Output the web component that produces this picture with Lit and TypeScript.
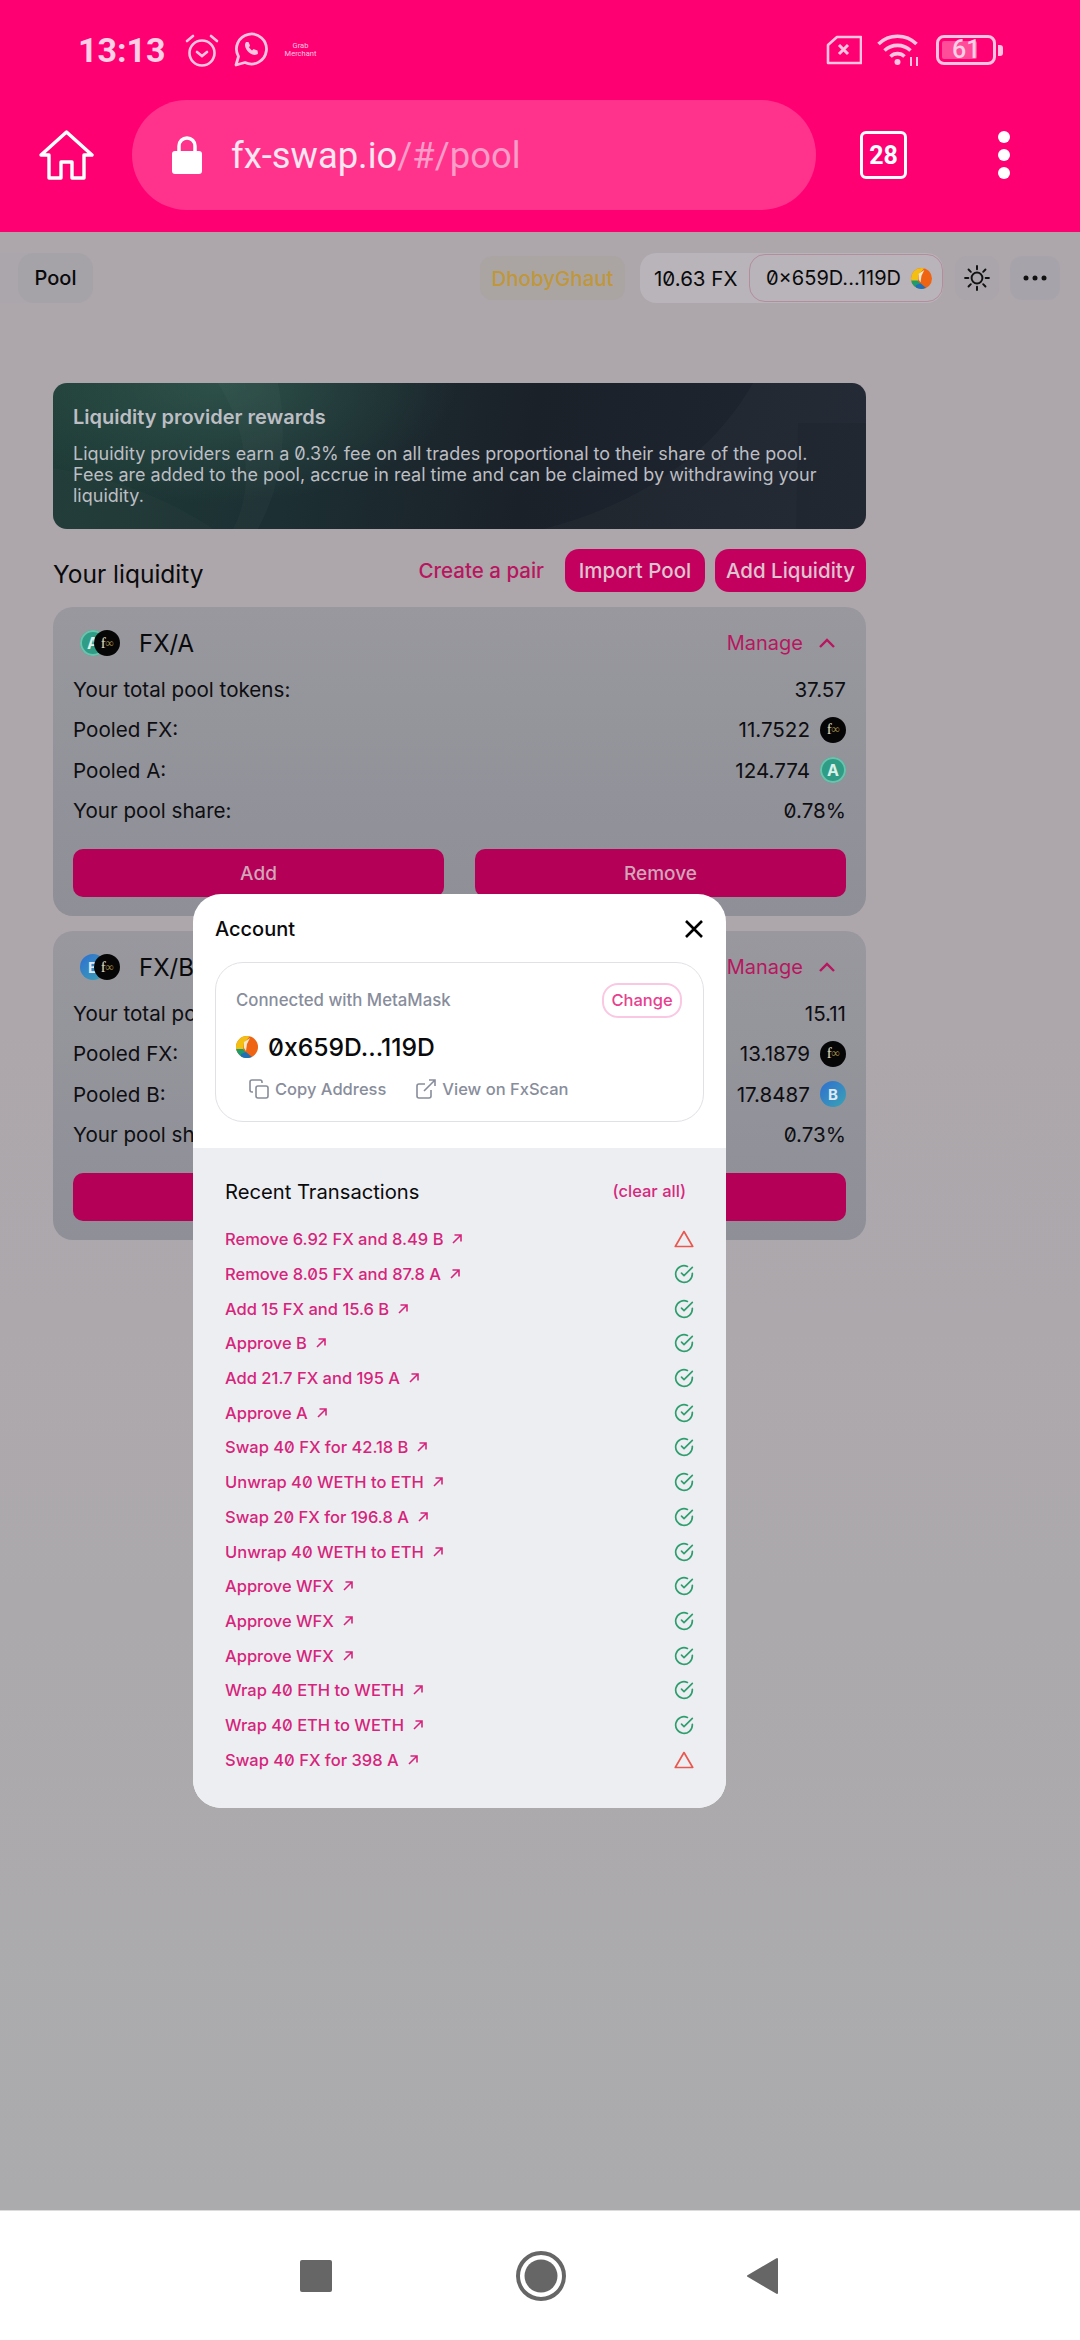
import { LitElement, html, css } from "lit";
import { customElement } from "lit/decorators.js";

const txs: [string, boolean][] = [
  ["Remove 6.92 FX and 8.49 B", false],
  ["Remove 8.05 FX and 87.8 A", true],
  ["Add 15 FX and 15.6 B", true],
  ["Approve B", true],
  ["Add 21.7 FX and 195 A", true],
  ["Approve A", true],
  ["Swap 40 FX for 42.18 B", true],
  ["Unwrap 40 WETH to ETH", true],
  ["Swap 20 FX for 196.8 A", true],
  ["Unwrap 40 WETH to ETH", true],
  ["Approve WFX", true],
  ["Approve WFX", true],
  ["Approve WFX", true],
  ["Wrap 40 ETH to WETH", true],
  ["Wrap 40 ETH to WETH", true],
  ["Swap 40 FX for 398 A", false],
];

const identicon = (size: number, id: string) => html`<svg width=${size} height=${size} viewBox="0 0 22 22" aria-hidden="true">
  <defs><clipPath id=${id}><circle cx="11" cy="11" r="11"></circle></clipPath></defs>
  <g clip-path="url(#${id})">
    <rect width="22" height="22" fill="#ee6413"></rect>
    <path d="M0 0H14L8 7 7 16 0 14Z" fill="#f2bf12"></path>
    <path d="M0 13 7 13 14 22H0Z" fill="#1f9c6c"></path>
    <path d="M5 18 10 16 17 22H5Z" fill="#1f6fb8"></path>
    <path d="M8 6 14 2 11 8 10 15 8 12Z" fill="#f4e6c8"></path>
  </g>
</svg>`;

@customElement("token-icon")
class TokenIcon extends LitElement {
  static properties = { kind: {} };
  kind = "fx";
  static styles = css`
    :host { display: block; width: 26px; height: 26px; position: relative; }
    .c { width: 100%; height: 100%; border-radius: 50%; display: flex; align-items: center; justify-content: center; box-sizing: border-box; font-family: Inter, sans-serif; }
    .fx { background: #060606; color: #e6e0cc; font: 15px "Liberation Serif", serif; letter-spacing: -0.5px; }
    .fx span { color: #a8934a; font-size: 12px; }
    .a { background: #2f9d85; color: #dcefe9; font-weight: 700; font-size: 16px; box-shadow: inset 0 0 0 2px #6cc2ad; }
    .b { background: linear-gradient(135deg, #2f6fd0, #3aa3b4); color: #dfe9f5; font-weight: 700; font-size: 15px; }
  `;
  render() {
    if (this.kind === "fx") return html`<div class="c fx">f<span>∞</span></div>`;
    return html`<div class="c ${this.kind}">${this.kind.toUpperCase()}</div>`;
  }
}

@customElement("app-root")
class AppRoot extends LitElement {
  static styles = css`
    :host { display: block; width: 1080px; height: 2340px; overflow: hidden; font-family: Inter, "Liberation Sans", sans-serif; font-feature-settings: "zero" 1; color: #0a0a0c; }
    .page { width: 1080px; height: 2340px; display: flex; flex-direction: column; }

    .chrome { height: 232px; flex: none; background: #ff0073; box-sizing: border-box; display: flex; flex-direction: column; color: #fff; }
    .status { height: 100px; flex: none; display: flex; align-items: center; padding: 0 77px 0 78px; box-sizing: border-box; font-family: Roboto, sans-serif; }
    .time { font-size: 34px; font-weight: 700; color: #ffd0e5; margin-right: 18px; }
    .status svg { display: block; flex: none; }
    .grab { font-size: 7.5px; line-height: 8px; text-align: center; margin-left: 16px; color: #ffc8e0; }
    .spacer { flex: 1; }
    .batt { width: 60px; height: 30px; border: 3px solid #ffc4df; border-radius: 8px; box-sizing: border-box; margin-left: 14px; display: flex; align-items: center; padding: 3px; position: relative; }
    .batt i { display: block; width: 35px; height: 100%; background: #ff4d9a; border-radius: 2px; }
    .batt b { position: absolute; left: 13px; top: 0; font-size: 25px; line-height: 24px; font-weight: 500; color: #ffd0e5; }
    .nub { width: 5px; height: 11px; background: #ffc4df; border-radius: 0 3px 3px 0; margin-left: 2px; }
    .addr { display: flex; align-items: center; height: 110px; padding: 0 0 0 39px; }
    .pill { margin-left: 38px; width: 684px; height: 110px; border-radius: 55px; background: #ff338c; display: flex; align-items: center; padding-left: 40px; box-sizing: border-box; font: 36.4px Roboto, sans-serif; }
    .pill .host { margin-left: 29px; color: #ffe6f1; }
    .pill .path { color: #ff9cc8; }
    .tabs { margin-left: 44px; width: 47px; height: 48px; border: 3px solid #fff; border-radius: 6px; box-sizing: border-box; display: flex; align-items: center; justify-content: center; font: 700 25px Roboto, sans-serif; }
    .dots { margin-left: 91px; display: flex; flex-direction: column; gap: 6px; }
    .dots i { width: 12px; height: 12px; border-radius: 50%; background: #fff; display: block; }

    main { flex: 1; position: relative; background: linear-gradient(180deg, #ada6ab 0%, #ada7ac 40%, #ababad 100%); overflow: hidden; }
    .topbar { display: flex; align-items: center; height: 50px; margin-top: 21px; }
    .nav-pill { background: #aaa6ab; border-radius: 0 16px 16px 0; width: 93px; height: 50px; display: flex; justify-content: flex-end; }
    .nav-pill span { width: 75px; background: #a5a3a8; border-radius: 16px; display: flex; align-items: center; justify-content: center; font-size: 20px; font-weight: 500; }
    .net { margin-left: 387px; width: 145px; height: 44px; border-radius: 12px; background: #aaa5a3; color: #c0973b; display: flex; align-items: center; justify-content: center; font-size: 20.5px; font-weight: 500; }
    .wallet { margin-left: 15px; height: 50px; width: 303px; background: #b8b4b9; border-radius: 16px; display: flex; align-items: center; font-size: 20.5px; box-sizing: border-box; padding-left: 14px; }
    .acct { margin-left: auto; width: 194px; height: 48px; border: 1.5px solid #b48d9c; border-radius: 16px; box-sizing: border-box; display: flex; align-items: center; padding-left: 16px; gap: 10px; background: #b8b4b9; font-size: 20px; }
    .sq { width: 44px; height: 44px; border-radius: 12px; display: flex; align-items: center; justify-content: center; background: #a9a5aa; flex: none; }
    .sq.sun { margin-left: 12px; }
    .sq.more { margin-left: 11px; width: 50px; background: #a6a4aa; }

    .content { margin: 80px 0 0 53px; width: 813px; display: flex; flex-direction: column; }
    .banner { height: 146px; border-radius: 14px; box-sizing: border-box; padding: 22px 20px 0; color: #bcbec3; overflow: hidden; position: relative;
      background: radial-gradient(ellipse 240px 120px at 165px 0, rgba(58,105,90,0.55), rgba(58,105,90,0) 100%), linear-gradient(100deg, #1f3c37 0%, #1c3033 28%, #1b2129 58%, #1f2632 100%); }
    .banner svg { position: absolute; inset: 0; }
    .banner h3, .banner p { position: relative; }
    .banner h3 { margin: 0 0 14px; font-size: 20px; line-height: 24px; font-weight: 600; }
    .banner p { margin: 0; font-size: 18px; line-height: 21px; }
    .lhead { display: flex; align-items: center; margin-top: 20px; height: 43px; gap: 10px; }
    .lhead h2 { margin: 6px auto 0 0; font-size: 24.5px; font-weight: 400; }
    .link { color: #b8165f; font-size: 20.5px; font-weight: 500; margin-right: 11px; }
    .small { height: 43px; background: #c4005f; color: #dcc4d0; border-radius: 14px; display: flex; align-items: center; justify-content: center; font-size: 20.5px; font-weight: 500; }
    .small.imp { width: 140px; }
    .small.add { width: 151px; }
    .card { margin-top: 15px; height: 309px; border-radius: 20px; background: linear-gradient(180deg, #98989e, #8e8f97); padding: 0 20px; box-sizing: border-box; display: flex; flex-direction: column; }
    .card + .card { margin-top: 15px; }
    .chead { display: flex; align-items: center; height: 62px; padding-top: 10px; box-sizing: border-box; }
    .pair { display: flex; width: 40px; margin-left: 7px; }
    .pair token-icon + token-icon { margin-left: -12px; }
    .chead strong { margin-left: 19px; font-size: 24px; font-weight: 400; }
    .manage { margin-left: auto; margin-right: 10px; display: flex; align-items: center; gap: 15px; color: #b8165f; font-size: 20px; }
    .row { height: 40.5px; display: flex; align-items: center; justify-content: space-between; font-size: 20.6px; color: #0e0e12; }
    .val { display: flex; align-items: center; gap: 10px; }
    .btns { display: flex; gap: 31px; margin-top: 18px; }
    .btn { flex: 1; height: 48px; border-radius: 10px; background: #b40057; color: #d3a5ba; display: flex; align-items: center; justify-content: center; font-size: 19px; font-weight: 500; }

    .modal { position: absolute; left: 193px; top: 662px; width: 533px; height: 914px; background: #fff; border-radius: 28px; overflow: hidden; display: flex; flex-direction: column; }
    .mhead { display: flex; align-items: center; justify-content: space-between; padding: 22px 22px 0; height: 26px; font-size: 20px; font-weight: 500; }
    .box { margin: 20px 22px 0; height: 160px; border: 1.5px solid #e0e1e5; border-radius: 28px; box-sizing: border-box; padding: 20px 20px 0; }
    .conn { display: flex; align-items: center; justify-content: space-between; font-size: 16.8px; color: #888d9b; font-weight: 500; height: 34px; }
    .change { width: 80px; height: 35px; border: 2.5px solid #fac8e2; border-radius: 16px; box-sizing: border-box; color: #e8408f; display: flex; align-items: center; justify-content: center; font-size: 16.5px; margin-right: 1px; }
    .who { display: flex; align-items: center; gap: 10px; margin-top: 12px; height: 36px; font-size: 24.7px; font-weight: 500; }
    .acts { display: flex; align-items: center; margin-top: 7px; padding-left: 13px; height: 34px; color: #888d9b; font-size: 16.5px; font-weight: 500; }
    .acts svg { margin-right: 6px; }
    .acts span + svg { margin-left: 30px; }
    .recent { margin-top: 26px; flex: 1; background: #edeef2; padding: 0 32px; }
    .rhead { display: flex; justify-content: space-between; align-items: center; height: 86px; margin-bottom: -12px; font-size: 20.2px; }
    .rhead a { color: #d6287e; font-size: 16.5px; font-weight: 500; margin-right: 8px; }
    .tx { height: 34.7px; display: flex; align-items: center; justify-content: space-between; color: #d6247c; font-size: 16.5px; font-weight: 500; }
    .tx span { display: flex; align-items: center; gap: 8px; }
    .tx svg { display: block; }

    .sysnav { height: 130px; flex: none; background: #fff; border-top: 1px solid #dcdcdc; box-sizing: border-box; display: flex; align-items: center; padding-left: 300px; }
    .sysnav .s { width: 32px; height: 32px; background: #666; border-radius: 2px; }
    .sysnav svg { display: block; }
    .ml-wa { margin-left: 13px; }
    .ml-wifi { margin-left: 15px; }
    .ml-circle { margin-left: 184px; }
    .ml-back { margin-left: 180px; }
  `;

  arrow() {
    return html`<svg width="12" height="12" viewBox="0 0 12 12" fill="none" stroke="#d6247c" stroke-width="1.6" aria-hidden="true"><path d="M2 10 10 2M3.500 2H10V8.500"></path></svg>`;
  }
  status(ok: boolean) {
    return ok
      ? html`<svg width="20" height="20" viewBox="0 0 24 24" fill="none" stroke="#2f9e6e" stroke-width="2" stroke-linecap="round" stroke-linejoin="round" aria-hidden="true"><path d="M22 11.100V12a10 10 0 1 1-5.900-9.100"></path><path d="M22 4 12 14l-3-3"></path></svg>`
      : html`<svg width="20" height="20" viewBox="0 0 24 24" fill="none" stroke="#e8584f" stroke-width="2" stroke-linejoin="round" aria-hidden="true"><path d="M12 3 1.500 21h21Z"></path></svg>`;
  }
  card(name: string, tok: string, total: string, fx: string, other: string, share: string, labels: boolean) {
    return html`<section class="card">
      <div class="chead">
        <div class="pair"><token-icon kind=${tok}></token-icon><token-icon kind="fx"></token-icon></div>
        <strong>FX/${tok.toUpperCase()}</strong>
        <div class="manage">Manage
          <svg width="18" height="11" viewBox="0 0 18 11" fill="none" stroke="#b8165f" stroke-width="2.400" aria-hidden="true"><path d="M2 9 9 2l7 7"></path></svg>
        </div>
      </div>
      <div class="row"><span>Your total pool tokens:</span><span>${total}</span></div>
      <div class="row"><span>Pooled FX:</span><span class="val">${fx}<token-icon kind="fx"></token-icon></span></div>
      <div class="row"><span>Pooled ${name}:</span><span class="val">${other}<token-icon kind=${tok}></token-icon></span></div>
      <div class="row"><span>Your pool share:</span><span>${share}</span></div>
      <div class="btns"><div class="btn">${labels ? "Add" : ""}</div><div class="btn">${labels ? "Remove" : ""}</div></div>
    </section>`;
  }

  render() {
    return html`<div class="page">
      <header class="chrome">
        <div class="status">
          <span class="time">13:13</span>
          <svg width="36" height="36" viewBox="0 0 36 36" fill="none" stroke="#ffc4df" stroke-width="2.600" stroke-linecap="round" aria-hidden="true"><circle cx="18" cy="21" r="12.500"></circle><path d="M13 20l5 4 5-4M3 9l6-5M33 9l-6-5"></path></svg>
          <svg class="ml-wa" width="36" height="36" viewBox="0 0 36 36" fill="none" stroke="#ffc4df" stroke-width="2.800" aria-hidden="true"><path d="M3 33l2.500-8.500A15 15 0 1 1 12 30.500Z" stroke-linejoin="round"></path><path d="M13 10c-2.500 3 0 8 3 10.500s7 3.500 9 1l-.5-3-4-1.500-1.500 1.500-3-3 1-2-1.500-3.500Z" fill="#ffc4df" stroke="none"></path></svg>
          <div class="grab">Grab<br />Merchant</div>
          <div class="spacer"></div>
          <svg width="36" height="30" viewBox="0 0 36 30" fill="none" stroke="#ffc4df" stroke-width="2.600" stroke-linejoin="round" aria-hidden="true"><path d="M11 2H35V28H2V10Z"></path><path d="M13 10l9 9M22 10l-9 9" stroke-width="3"></path></svg>
          <svg class="ml-wifi" width="45" height="34" viewBox="0 0 45 34" fill="none" stroke="#ffc4df" stroke-width="3.600" aria-hidden="true"><path d="M1.500 11a27 27 0 0 1 38 0M7.500 17.500a19 19 0 0 1 26 0M13.500 23.500a10 10 0 0 1 14 0"></path><circle cx="20.500" cy="29" r="3" fill="#ffc4df" stroke="none"></circle><path d="M34 24v9M40 24v9" stroke-width="2"></path></svg>
          <div class="batt"><i></i><b>61</b></div><div class="nub"></div>
        </div>
        <div class="addr">
          <svg width="55" height="50" viewBox="0 0 55 50" fill="none" stroke="#fff" stroke-width="3.400" stroke-linejoin="round" aria-hidden="true"><path d="M2 25 27.500 2 53 25H45V48H33V32H22V48H10V25Z"></path></svg>
          <div class="pill">
            <svg width="30" height="38" viewBox="0 0 30 38" aria-hidden="true"><path d="M7 16V10a8 8 0 0 1 16 0v6" fill="none" stroke="#fff" stroke-width="3.500"></path><rect y="15" width="30" height="23" rx="3" fill="#fff"></rect></svg>
            <span class="host">fx-swap.io</span><span class="path">/#/pool</span>
          </div>
          <div class="tabs">28</div>
          <div class="dots"><i></i><i></i><i></i></div>
        </div>
      </header>
      <main>
        <div class="topbar">
          <div class="nav-pill"><span>Pool</span></div>
          <div class="net">DhobyGhaut</div>
          <div class="wallet">10.63 FX<div class="acct">0×659D...119D ${identicon(21, "ida")}</div></div>
          <div class="sq sun"><svg width="26" height="26" viewBox="0 0 24 24" fill="none" stroke="#111" stroke-width="1.800" stroke-linecap="round" aria-hidden="true"><circle cx="12" cy="12" r="5"></circle><path d="M12 1v3M12 20v3M4.200 4.200l2.100 2.100M17.700 17.700l2.100 2.100M1 12h3M20 12h3M4.200 19.800l2.100-2.100M17.700 6.300l2.100-2.100"></path></svg></div>
          <div class="sq more"><svg width="24" height="6" viewBox="0 0 24 6" fill="#111" aria-hidden="true"><circle cx="3" cy="3" r="2.500"></circle><circle cx="12" cy="3" r="2.500"></circle><circle cx="21" cy="3" r="2.500"></circle></svg></div>
        </div>
        <div class="content">
          <section class="banner">
            <svg width="813" height="146" viewBox="0 0 813 146" aria-hidden="true"><path d="M165 0H225C235 50 230 100 205 146H180C205 100 190 40 165 0Z" fill="#fff" fill-opacity="0.025"></path><path d="M0 85C60 95 115 115 160 146H0Z" fill="#fff" fill-opacity="0.02"></path><path d="M490 146C590 120 660 70 700 0H813V146Z" fill="#fff" fill-opacity="0.025"></path><path d="M745 40 743 146H813V40Z" fill="#000" fill-opacity="0.06"></path></svg>
            <h3>Liquidity provider rewards</h3>
            <p>Liquidity providers earn a 0.3% fee on all trades proportional to their share of the pool. Fees are added to the pool, accrue in real time and can be claimed by withdrawing your liquidity.</p>
          </section>
          <div class="lhead">
            <h2>Your liquidity</h2>
            <span class="link">Create a pair</span>
            <div class="small imp">Import Pool</div>
            <div class="small add">Add Liquidity</div>
          </div>
          ${this.card("A", "a", "37.57", "11.7522", "124.774", "0.78%", true)}
          ${this.card("B", "b", "15.11", "13.1879", "17.8487", "0.73%", false)}
        </div>
        <div class="modal">
          <div class="mhead"><span>Account</span>
            <svg width="20" height="20" viewBox="0 0 20 20" fill="none" stroke="#000" stroke-width="2.600" aria-hidden="true"><path d="M2 2 18 18M18 2 2 18"></path></svg>
          </div>
          <div class="box">
            <div class="conn"><span>Connected with MetaMask</span><div class="change">Change</div></div>
            <div class="who">${identicon(22, "idb")}<span>0x659D...119D</span></div>
            <div class="acts">
              <svg width="20" height="20" viewBox="0 0 20 20" fill="none" stroke="#888d9b" stroke-width="1.600" aria-hidden="true"><rect x="7" y="7" width="12" height="12" rx="2"></rect><path d="M4 13H3a2 2 0 0 1-2-2V3a2 2 0 0 1 2-2h8a2 2 0 0 1 2 2v1"></path></svg>
              <span>Copy Address</span>
              <svg width="20" height="20" viewBox="0 0 20 20" fill="none" stroke="#888d9b" stroke-width="1.600" aria-hidden="true"><path d="M15 11v6a2 2 0 0 1-2 2H3a2 2 0 0 1-2-2V7a2 2 0 0 1 2-2h6M13 1h6v6M8 12 19 1"></path></svg>
              <span>View on FxScan</span>
            </div>
          </div>
          <div class="recent">
            <div class="rhead"><span>Recent Transactions</span><a>(clear all)</a></div>
            ${txs.map(([t, ok]) => html`<div class="tx"><span>${t} ${this.arrow()}</span>${this.status(ok)}</div>`)}
          </div>
        </div>
      </main>
      <footer class="sysnav">
        <div class="s"></div>
        <svg class="ml-circle" width="50" height="50" viewBox="0 0 50 50" aria-hidden="true"><circle cx="25" cy="25" r="23" fill="none" stroke="#666" stroke-width="4"></circle><circle cx="25" cy="25" r="16.500" fill="#666"></circle></svg>
        <svg class="ml-back" width="32" height="38" viewBox="0 0 32 38" aria-hidden="true"><path d="M31 2V36L2 19Z" fill="#666" stroke="#666" stroke-width="2" stroke-linejoin="round"></path></svg>
      </footer>
    </div>`;
  }
}
